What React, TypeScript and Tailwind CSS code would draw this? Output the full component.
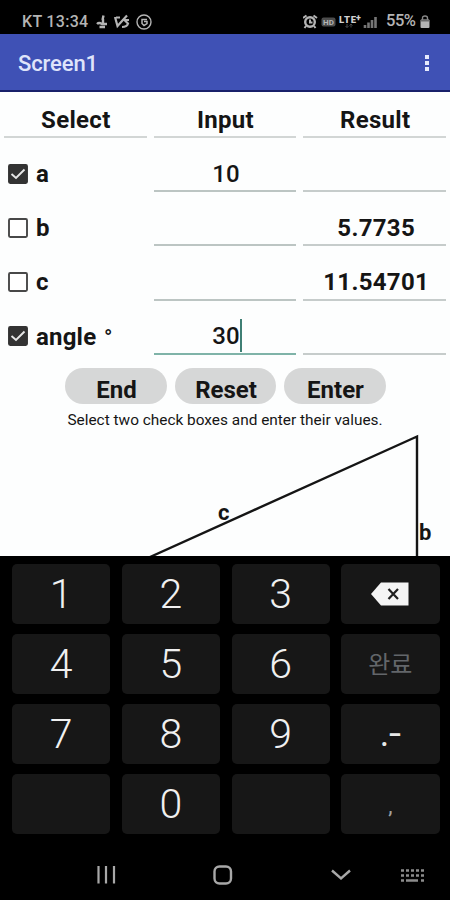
import React from 'react';

interface Row {
  label: string;
  unit?: string;
  checked: boolean;
  input: string;
  result: string;
  focused?: boolean;
}

const ROWS: Row[] = [
  { label: 'a', checked: true, input: '10', result: '' },
  { label: 'b', checked: false, input: '', result: '5.7735' },
  { label: 'c', checked: false, input: '', result: '11.54701' },
  { label: 'angle', unit: '°', checked: true, input: '30', result: '', focused: true },
];

const HEADERS = ['Select', 'Input', 'Result'];

const BUTTONS = ['End', 'Reset', 'Enter'];

const KEYS = ['1', '2', '3', 'back', '4', '5', '6', 'done', '7', '8', '9', '.-', '', '0', '', ','];

const StatusBar: React.FC = () => (
  <div className="flex h-[34px] items-center bg-black pt-[9px] pl-[22px] pr-[20px] text-[#b4b4b4]">
    <span className="w-[74px] whitespace-nowrap text-[16px] font-medium leading-none tracking-[0.3px]">KT 13:34</span>
    <svg width="58" height="16" viewBox="0 0 58 16" fill="none" stroke="#b4b4b4">
      <path d="M7.5 1.5 L6.5 6 M7 5 V11" strokeWidth="2.4" />
      <path d="M1 10 Q3 8 6 10 H11 M3.5 13 H9" strokeWidth="2.4" />
      <path d="M19 3 L21.5 12 L31 1.5 M20 3.5 H24" strokeWidth="2.2" />
      <path d="M33 6 H28.5 L32 9.5 Q31 13 26 13" strokeWidth="2.2" />
      <circle cx="48" cy="8" r="7" strokeWidth="1.4" />
      <path d="M51 5.5 H46 V9.5 L48 11.5 L51 9.5 V7.5 H48" strokeWidth="1.5" />
    </svg>
    <svg className="ml-auto" width="78" height="16" viewBox="0 0 78 16" fill="none" stroke="#b4b4b4">
      <circle cx="7" cy="8" r="4.8" strokeWidth="2.4" />
      <path d="M7 5.5 V8.5 H9.5 M0 4 L3.5 1.5 M14 4 L10.5 1.5 M3 12 L1.5 14 M11 12 L12.5 14" strokeWidth="2" />
      <rect x="18.5" y="3.5" width="14" height="9" rx="2" fill="#4c4c4c" stroke="none" />
      <text x="20" y="11" fontSize="8" fontWeight="700" fill="#b4b4b4" stroke="none">HD</text>
      <text x="36" y="8.5" fontSize="9.5" fontWeight="900" fill="#d0d0d0" stroke="none" textLength="17">LTE</text>
      <text x="53" y="6.5" fontSize="9" fontWeight="900" fill="#d0d0d0" stroke="none">+</text>
      <path d="M44 10 V13.5 M42.5 12 L44 13.5 L45.5 12 M48 13.5 V10 M46.5 11.5 L48 10 L49.5 11.5" stroke="#484848" strokeWidth="1" />
      <path d="M62 14 V11 M65.5 14 V8.5 M69 14 V6 M72.5 14 V3" stroke="#767676" strokeWidth="2.6" />
    </svg>
    <span className="ml-[5px] w-[32px] whitespace-nowrap text-[16.5px] font-medium leading-none tracking-[-0.5px]">55%</span>
    <svg className="ml-[2px]" width="10" height="14" viewBox="0 0 10 14">
      <path d="M2.5 5 V3 Q2.5 1 5 1 Q7.5 1 7.5 3 V5" fill="none" stroke="#8a8a8a" strokeWidth="1.4" />
      <rect x="0.5" y="4.5" width="9" height="8.5" rx="1" fill="#b4b4b4" />
      <path d="M1 5.5 H9" stroke="#6a6a6a" strokeWidth="2" />
    </svg>
  </div>
);

const CheckBox: React.FC<{ checked: boolean }> = ({ checked }) => (
  <svg width="20" height="20" viewBox="0 0 20 20" fill="none" className="-mt-[1px]">
    <rect
      x="1"
      y="1"
      width="18"
      height="18"
      rx="1.2"
      fill={checked ? '#333333' : '#ffffff'}
      stroke={checked ? '#333333' : '#484848'}
      strokeWidth="1.9"
    />
    {checked && <path d="M3.5 10 L8 14 L16.5 5.5" stroke="#e8e8e8" strokeWidth="1.9" />}
  </svg>
);

const Key: React.FC<{ value: string }> = ({ value }) => {
  if (value === 'back') {
    return (
      <svg width="38" height="24" viewBox="0 0 38 24">
        <path d="M10 0.5 H37.5 V23.5 H10 L0 12 Z" fill="#f4f4f4" />
        <path d="M17.5 7 L27 17 M27 7 L17.5 17" stroke="#202020" strokeWidth="2.2" />
      </svg>
    );
  }
  if (value === 'done') {
    return <span className="-mt-[2px] font-['Noto_Sans_CJK_KR',sans-serif] text-[24px] font-normal text-[#63666a]">완료</span>;
  }
  if (value === '.-') {
    return (
      <span className="-ml-[2px] flex text-[36px] text-[#e8e8e8]">
        .<span className="origin-left scale-x-120">-</span>
      </span>
    );
  }
  if (value === ',') {
    return <span className="pt-[4px] text-[22px] text-[#a0a0a0]">,</span>;
  }
  return <span className="text-[41px] font-light text-[#f0f0f0]">{value}</span>;
};

const App: React.FC = () => {
  return (
    <div className="flex h-[900px] w-[450px] flex-col overflow-hidden bg-black font-[Roboto,sans-serif]">
      <StatusBar />

      <header className="flex h-[57.5px] shrink-0 items-center justify-between border-b-2 border-[#18206a] bg-[#3f51b5] pl-[18px] pr-[21px]">
        <h1 className="pt-[4px] text-[22px] font-medium tracking-[-0.1px] text-[#dfe4fa]">Screen1</h1>
        <div className="flex flex-col gap-[2px] pt-[3px]">
          <span className="size-[4px] bg-[#e6eafc]" />
          <span className="size-[4px] bg-[#e6eafc]" />
          <span className="size-[4px] bg-[#e6eafc]" />
        </div>
      </header>

      <main className="flex h-[464px] shrink-0 flex-col overflow-hidden bg-[#fdfefe] text-[#151515]">
        <div className="grid h-[46.5px] shrink-0 grid-cols-3 gap-x-[7px] px-[4px]">
          {HEADERS.map((header) => (
            <div
              key={header}
              className="flex items-center justify-center border-b-2 border-[#d2d6d5] pt-[13px] pl-[1px] text-[24px] font-bold leading-none tracking-[0.3px]"
            >
              {header}
            </div>
          ))}
        </div>

        {ROWS.map((row) => (
          <div key={row.label} className="grid h-[54.2px] shrink-0 grid-cols-3 gap-x-[7px] px-[4px]">
            <div className="flex items-center gap-[8px] pt-[18px] pl-[4px] text-[24px] font-bold leading-none">
              <CheckBox checked={row.checked} />
              <span className="whitespace-nowrap tracking-[0.2px]">
                {row.label}
                {row.unit && <span className="ml-[2px] text-[22px] font-medium"> {row.unit}</span>}
              </span>
            </div>
            <div
              className={
                row.focused
                  ? 'flex items-center justify-center border-b-2 border-[#7fb3a8] pt-[18px] pl-[2px] text-[24px] font-medium leading-none'
                  : 'flex items-center justify-center border-b-2 border-[#bcc5c3] pt-[20px] pl-[2px] text-[24px] font-medium leading-none'
              }
            >
              {row.input}
              {row.focused && <span className="-mr-[2px] h-[33px] w-[2px] bg-[#3f7f74]" />}
            </div>
            <div className="flex items-center justify-center border-b-2 border-[#c6cccb] pt-[20px] pl-[3px] text-[24px] font-bold leading-none tracking-[0.3px]">
              {row.result}
            </div>
          </div>
        ))}

        <div className="mt-[13px] flex shrink-0 justify-center gap-[8px] pl-[1px]">
          {BUTTONS.map((label) => (
            <button
              key={label}
              className="h-[36px] w-[101.5px] rounded-full bg-[#d6d7d7] pt-[8px] pl-[1px] text-[24px] font-bold leading-none"
            >
              {label}
            </button>
          ))}
        </div>
        <p className="mt-[7px] shrink-0 text-center text-[15.4px] leading-[18px]">
          Select two check boxes and enter their values.
        </p>

        <svg className="mt-auto shrink-0" width="450" height="124" viewBox="0 431.5 450 124">
          <path d="M150 556.5 L417 436 V556" fill="none" stroke="#151515" strokeWidth="2.4" />
          <text x="218" y="519" fontSize="22" fontWeight="700" fill="#151515">c</text>
          <text x="419" y="539" fontSize="22" fontWeight="700" fill="#151515">b</text>
        </svg>
      </main>

      <div className="grid h-[278.5px] shrink-0 grid-cols-4 grid-rows-4 gap-x-[11.5px] gap-y-[10px] pt-[8.5px] pl-[12px] pr-[10.5px]">
        {KEYS.map((value, i) => (
          <div key={i} className="flex items-center justify-center rounded-[5px] bg-[#171717] leading-none">
            <Key value={value} />
          </div>
        ))}
      </div>

      <nav className="flex flex-1 items-center pl-[96px]">
        <svg width="332" height="24" viewBox="0 0 332 24" fill="none" stroke="#a8a8a8" className="mt-[15px]">
          <path d="M2.5 3 V20.5 M10 3 V20.5 M18 3 V20.5" strokeWidth="2.2" />
          <rect x="118.5" y="3.5" width="16.5" height="17" rx="5" strokeWidth="2.4" />
          <path d="M236 7.5 L245 15.5 L254 7.5" strokeWidth="2.4" />
          <path d="M305 7.5 H328 M305 12.5 H328" strokeWidth="2.4" strokeDasharray="3 2" stroke="#8c8c8c" />
          <path d="M305 17.5 H308 M310 17.5 H322 M325 17.5 H328" strokeWidth="2.4" stroke="#8c8c8c" />
        </svg>
      </nav>
    </div>
  );
};

export default App;
